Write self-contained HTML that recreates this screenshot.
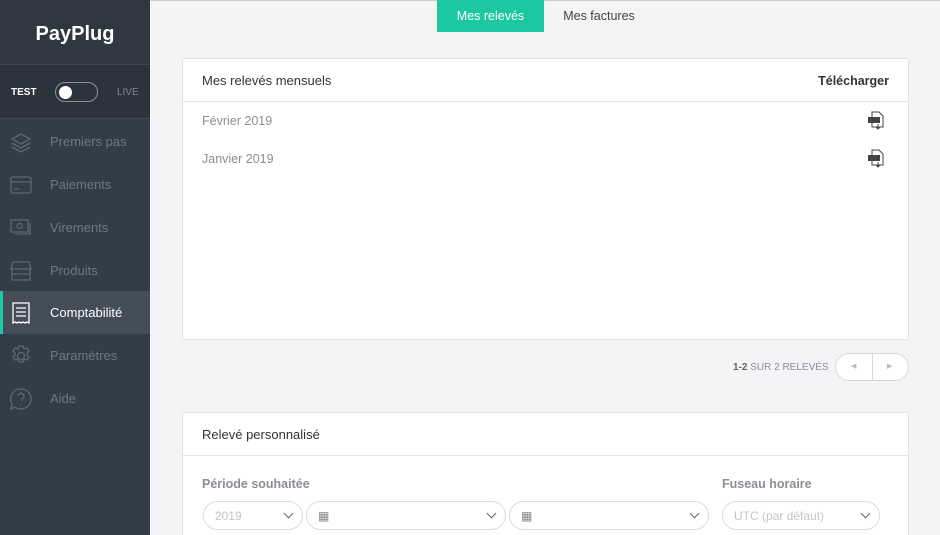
<!DOCTYPE html>
<html style="width:940px;height:535px;overflow:hidden"><head><meta charset="utf-8"><style>
*{box-sizing:border-box;margin:0;padding:0}
body{width:940px;height:535px;overflow:hidden;background:#f4f3f6;font-family:"Liberation Sans",sans-serif;position:relative}
.sb{position:absolute;left:0;top:0;width:150px;height:535px;background:#333d47}
.logo{height:65px;border-bottom:1px solid #3f4953;background:#2f3841;color:#fff;font-size:20px;font-weight:bold;text-align:center;line-height:68px}
.tog{height:54px;background:#2b333c;border-bottom:1px solid #3f4953;position:relative;font-size:10px;font-weight:bold}
.tog .t{position:absolute;left:11px;top:22px;color:#fff}
.tog .l{position:absolute;left:117px;top:22px;color:#7d8690;font-weight:normal}
.tog .sw{position:absolute;left:55px;top:17px;width:43px;height:20px;border:1.5px solid #8a939c;border-radius:10px}
.tog .sw i{position:absolute;left:3px;top:2.5px;width:13px;height:13px;border-radius:50%;background:#fff}
.it{position:absolute;left:0;width:150px;height:43px;color:#6e7882;font-size:13px;line-height:43px;padding-left:50px}
.it svg{position:absolute;left:10px;top:11px}
.it.a{background:#434e59;color:#fff;border-left:3px solid #1cc8a2;padding-left:47px}
.it.a svg{left:7px}
.tab{position:absolute;top:0;height:32px;line-height:32px;font-size:12.5px;text-align:center}
.card{position:absolute;left:182px;width:727px;background:#fff;border:1px solid #e2e1e6;border-radius:3px}
.hd{height:43px;border-bottom:1px solid #e2e1e6;font-size:13px;color:#333;line-height:44px;padding-left:19px}
.row{height:38px;line-height:38px;padding-left:19px;color:#8b8e93;font-size:12.5px;position:relative}
.sel{position:absolute;top:501px;height:29px;border:1px solid #dcdbe0;border-radius:15px;background:#fff;color:#c4c4c8;font-size:12px;line-height:28px;padding-left:11px}
.sel b{position:absolute;right:10px;top:8px;width:7px;height:7px;border-right:1.5px solid #666;border-bottom:1.5px solid #666;transform:rotate(45deg)}
</style></head><body>
<div class="sb">
<div class="logo">PayPlug</div>
<div class="tog"><span class="t">TEST</span><div class="sw"><i></i></div><span class="l">LIVE</span></div>
<div class="it" style="top:120px"><svg width="22" height="22" fill="none" stroke="#5d6771" stroke-width="1.3"><path d="M11 3l9 5-9 5-9-5z M2 12l9 5 9-5 M2 16l9 5 9-5"/></svg>Premiers pas</div>
<div class="it" style="top:163px"><svg width="22" height="22" fill="none" stroke="#5d6771" stroke-width="1.3"><rect x="1" y="3" width="20" height="16" rx="2"/><path d="M1 8h20M4 15h5"/></svg>Paiements</div>
<div class="it" style="top:206px"><svg width="22" height="22" fill="none" stroke="#5d6771" stroke-width="1.3"><rect x="1" y="3" width="17" height="12" rx="1"/><circle cx="9.5" cy="9" r="2.5"/><path d="M20 6v11H5"/></svg>Virements</div>
<div class="it" style="top:249px"><svg width="22" height="22" fill="none" stroke="#5d6771" stroke-width="1.3"><path d="M3 2h16l2 7H1zM2 9v11h18V9M2 14h18"/></svg>Produits</div>
<div class="it a" style="top:291px"><svg width="22" height="22" fill="none" stroke="#fff" stroke-width="1.3"><path d="M3 1h16v20l-2-1-2 1-2-1-2 1-2-1-2 1-2-1-2 1zM6 6h10M6 10h10M6 14h10"/></svg>Comptabilité</div>
<div class="it" style="top:334px"><svg width="22" height="22" fill="none" stroke="#5d6771" stroke-width="1.3"><circle cx="11" cy="11" r="3.5"/><path d="M9 1h4l1 3 3-1 2 3-2 2 0 2 2 2-2 3-3-1-1 3H9l-1-3-3 1-2-3 2-2v-2L3 6l2-3 3 1z"/></svg>Paramètres</div>
<div class="it" style="top:377px"><svg width="22" height="22" fill="none" stroke="#5d6771" stroke-width="1.3"><path d="M11 1a10 10 0 1 1-6 18l-4 2 1-5A10 10 0 0 1 11 1z"/><path d="M8 8a3 3 0 1 1 4 3v2M11 16v1"/></svg>Aide</div>
</div>
<div style="position:absolute;left:150px;top:0;width:790px;height:1px;background:#ccc"></div>
<div class="tab" style="left:437px;width:107px;background:#1cc8a2;color:#fff">Mes relevés</div>
<div class="tab" style="left:553px;width:92px;color:#444">Mes factures</div>
<div class="card" style="top:58px;height:282px">
<div class="hd">Mes relevés mensuels<span style="position:absolute;right:19px;font-weight:bold;font-size:12.5px">Télécharger</span></div>
<div class="row">Février 2019<svg style="position:absolute;right:23px;top:9px" width="18" height="20"><path d="M5 1h7l4 4v11H5z" fill="#fff" stroke="#444"/><rect x="1" y="6" width="12" height="6" fill="#444"/><path d="M11 13v5M9 16l2 2 2-2" stroke="#444" fill="none"/></svg></div>
<div class="row">Janvier 2019<svg style="position:absolute;right:23px;top:9px" width="18" height="20"><path d="M5 1h7l4 4v11H5z" fill="#fff" stroke="#444"/><rect x="1" y="6" width="12" height="6" fill="#444"/><path d="M11 13v5M9 16l2 2 2-2" stroke="#444" fill="none"/></svg></div>
</div>
<div style="position:absolute;left:733px;top:362px;font-size:10px;color:#8b8e93"><b style="color:#666">1-2</b> SUR 2 RELEVÉS</div>
<div style="position:absolute;left:835px;top:353px;width:74px;height:28px;border:1px solid #d8d7dc;border-radius:14px;background:#fff"><div style="position:absolute;left:36px;top:0;width:1px;height:26px;background:#d8d7dc"></div><span style="position:absolute;left:15px;top:8px;font-size:7px;color:#bbb">◀</span><span style="position:absolute;left:51px;top:8px;font-size:7px;color:#bbb">▶</span></div>
<div class="card" style="top:412px;height:140px">
<div class="hd">Relevé personnalisé</div>
</div>
<div style="position:absolute;left:202px;top:477px;font-size:12.5px;font-weight:bold;color:#8b8e93">Période souhaitée</div>
<div style="position:absolute;left:722px;top:477px;font-size:12.5px;font-weight:bold;color:#8b8e93">Fuseau horaire</div>
<div class="sel" style="left:203px;width:100px">2019<b></b></div>
<div class="sel" style="left:306px;width:200px"><span style="color:#888">▦</span><b></b></div>
<div class="sel" style="left:509px;width:200px"><span style="color:#888">▦</span><b></b></div>
<div class="sel" style="left:722px;width:158px">UTC (par défaut)<b></b></div>
</body></html>
